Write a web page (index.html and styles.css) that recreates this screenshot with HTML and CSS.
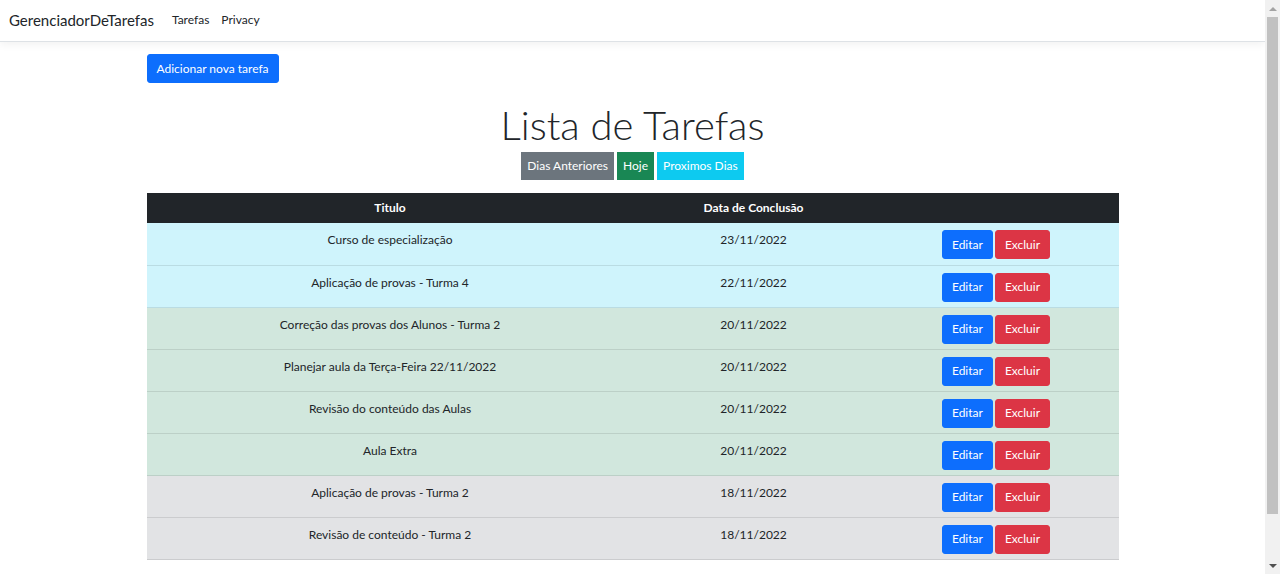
FILE: index.html
```html
<!DOCTYPE html>
<html lang="pt-br">
<head>
<meta charset="utf-8">
<title>Lista de Tarefas - GerenciadorDeTarefas</title>
<link rel="stylesheet" href="styles.css">
</head>
<body>
<div class="page">
  <header class="navbar">
    <a class="brand" href="#">GerenciadorDeTarefas</a>
    <nav class="nav-links">
      <a href="#">Tarefas</a>
      <a href="#">Privacy</a>
    </nav>
  </header>
  <main class="container">
    <div class="actions">
      <a class="btn btn-primary" href="#">Adicionar nova tarefa</a>
    </div>
    <h1 class="title">Lista de Tarefas</h1>
    <div class="filters">
      <a class="tag tag-secondary" href="#">Dias Anteriores</a>
      <a class="tag tag-success" href="#">Hoje</a>
      <a class="tag tag-info" href="#">Proximos Dias</a>
    </div>
    <table class="table">
      <thead>
        <tr><th class="col-title">Titulo</th><th class="col-date">Data de Conclusão</th><th></th></tr>
      </thead>
      <tbody>
        <tr class="row-info"><td>Curso de especialização</td><td>23/11/2022</td><td><div class="row-actions"><a class="btn btn-primary" href="#">Editar</a><a class="btn btn-danger" href="#">Excluir</a></div></td></tr>
        <tr class="row-info"><td>Aplicação de provas - Turma 4</td><td>22/11/2022</td><td><div class="row-actions"><a class="btn btn-primary" href="#">Editar</a><a class="btn btn-danger" href="#">Excluir</a></div></td></tr>
        <tr class="row-success"><td>Correção das provas dos Alunos - Turma 2</td><td>20/11/2022</td><td><div class="row-actions"><a class="btn btn-primary" href="#">Editar</a><a class="btn btn-danger" href="#">Excluir</a></div></td></tr>
        <tr class="row-success"><td>Planejar aula da Terça-Feira 22/11/2022</td><td>20/11/2022</td><td><div class="row-actions"><a class="btn btn-primary" href="#">Editar</a><a class="btn btn-danger" href="#">Excluir</a></div></td></tr>
        <tr class="row-success"><td>Revisão do conteúdo das Aulas</td><td>20/11/2022</td><td><div class="row-actions"><a class="btn btn-primary" href="#">Editar</a><a class="btn btn-danger" href="#">Excluir</a></div></td></tr>
        <tr class="row-success"><td>Aula Extra</td><td>20/11/2022</td><td><div class="row-actions"><a class="btn btn-primary" href="#">Editar</a><a class="btn btn-danger" href="#">Excluir</a></div></td></tr>
        <tr class="row-secondary"><td>Aplicação de provas - Turma 2</td><td>18/11/2022</td><td><div class="row-actions"><a class="btn btn-primary" href="#">Editar</a><a class="btn btn-danger" href="#">Excluir</a></div></td></tr>
        <tr class="row-secondary"><td>Revisão de conteúdo - Turma 2</td><td>18/11/2022</td><td><div class="row-actions"><a class="btn btn-primary" href="#">Editar</a><a class="btn btn-danger" href="#">Excluir</a></div></td></tr>
      </tbody>
    </table>
  </main>
</div>
<div class="scrollbar" aria-hidden="true">
  <div class="sb-arrow sb-up"></div>
  <div class="sb-track"><div class="sb-thumb"></div></div>
  <div class="sb-arrow sb-down"></div>
</div>
</body>
</html>
```

FILE: styles.css
```css
* { box-sizing: border-box; }
html, body {
  margin: 0;
  padding: 0;
}
body {
  display: flex;
  height: 100vh;
  overflow: hidden;
  font-family: "Lato", "Segoe UI", "Noto Sans", sans-serif;
  font-size: 12px;
  line-height: 18px;
  color: #212529;
  background: #fff;
}
a { text-decoration: none; }

.page {
  flex: 1;
  min-width: 0;
  overflow: hidden;
}

.navbar {
  display: flex;
  align-items: center;
  height: 42px;
  padding: 0 9px 1px;
  border-bottom: 1px solid #dee2e6;
  box-shadow: 0 3px 8px rgba(0, 0, 0, 0.05);
  background: #fff;
}
.brand {
  font-size: 15px;
  color: #212529;
  margin-right: 12px;
}
.nav-links { display: flex; }
.nav-links a {
  color: #212529;
  padding: 0 6px;
}

.container {
  width: 972px;
  margin: 0 auto;
}
.actions { padding-top: 12px; }

.btn {
  display: inline-block;
  color: #fff;
  line-height: 18px;
  padding: 4.5px 9px;
  border: 1px solid transparent;
  border-radius: 3px;
}
.btn-primary { background: #0d6efd; border-color: #0d6efd; }
.btn-danger { background: #dc3545; border-color: #dc3545; }

.title {
  text-align: center;
  font-size: 40px;
  font-weight: 300;
  line-height: 48px;
  margin: 18px 0 0;
}
.filters {
  display: flex;
  justify-content: center;
  gap: 3px;
  margin-top: 3px;
}
.tag {
  display: inline-block;
  color: #fff;
  line-height: 18px;
  padding: 5px 6px;
}
.tag-secondary { background: #6c757d; }
.tag-success { background: #198754; }
.tag-info { background: #0dcaf0; }

.table {
  width: 100%;
  border-collapse: collapse;
  margin-top: 13px;
}
.table th {
  background: #212529;
  color: #fff;
  font-weight: 700;
  height: 30px;
  padding: 0 6px;
  text-align: center;
}
.col-title { width: 487px; }
.col-date { width: 240px; }
.table td {
  text-align: center;
  vertical-align: top;
  height: 42px;
  padding: 7px 6px 0;
  border-bottom: 1px solid;
}
.table td:first-child, .table td:nth-child(2) { padding-top: 8px; }
.row-info td { background: #cff4fc; border-bottom-color: #badce3; }
.row-success td { background: #d1e7dd; border-bottom-color: #bcd0c7; }
.row-secondary td { background: #e2e3e5; border-bottom-color: #cbccce; }

.row-actions {
  display: flex;
  justify-content: center;
  gap: 2px;
}

.scrollbar {
  flex: 0 0 15px;
  display: flex;
  flex-direction: column;
  background: #f1f1f1;
}
.sb-arrow {
  height: 17px;
  display: flex;
  align-items: center;
  justify-content: center;
}
.sb-up::before, .sb-down::before {
  content: "";
  border-left: 4px solid transparent;
  border-right: 4px solid transparent;
}
.sb-up::before { border-bottom: 4px solid #a3a3a3; }
.sb-down::before { border-top: 4px solid #505050; }
.sb-track {
  flex: 1;
  padding: 0 2px;
}
.sb-thumb {
  height: 497px;
  background: #c1c1c1;
}
```
